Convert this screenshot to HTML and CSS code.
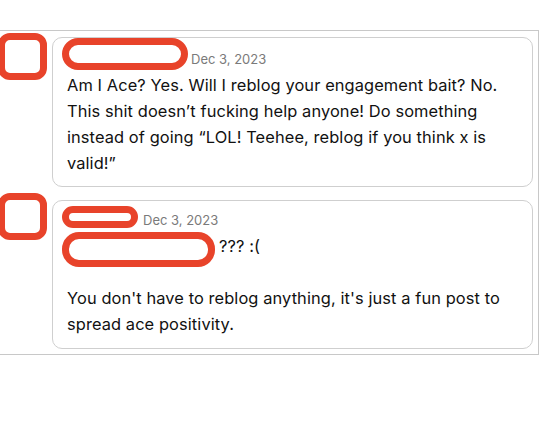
FILE: index.html
```html
<!DOCTYPE html>
<html>
<head>
<meta charset="utf-8">
<link rel="stylesheet" href="styles.css">
</head>
<body>
<div class="thread">
  <div class="row row-first">
    <div class="avatar-col"><div class="redact avatar"></div></div>
    <div class="card card-first">
      <div class="head">
        <span class="redact name-a"></span>
        <span class="date">Dec 3, 2023</span>
      </div>
      <p class="body">Am I Ace? Yes. Will I reblog your engagement bait? No. This shit doesn’t fucking help anyone! Do something instead of going “LOL! Teehee, reblog if you think x is valid!”</p>
    </div>
  </div>
  <div class="row row-second">
    <div class="avatar-col"><div class="redact avatar avatar-second"></div></div>
    <div class="card card-second">
      <div class="head">
        <span class="redact name-b"></span>
        <span class="date">Dec 3, 2023</span>
      </div>
      <p class="body mention-line"><span class="redact mention"></span>??? :(</p>
      <p class="body spaced">You don't have to reblog anything, it's just a fun post to spread ace positivity.</p>
    </div>
  </div>
</div>
</body>
</html>
```
FILE: styles.css
```css
html, body {
  margin: 0;
  padding: 0;
  background: #ffffff;
}
body {
  font-family: "Inter", "Liberation Sans", sans-serif;
  color: #111111;
}
.thread {
  margin-top: 30px;
  width: 539px;
  box-sizing: border-box;
  border: 1px solid #c8c8c8;
  border-left: none;
  padding: 6px 0 5px 0;
  display: flex;
  flex-direction: column;
  gap: 13px;
}
.row {
  display: flex;
  align-items: flex-start;
}
.avatar-col {
  width: 52px;
  flex: none;
}
.redact {
  box-sizing: border-box;
  border: 7px solid #e8432a;
  background: #ffffff;
}
.avatar {
  width: 49px;
  height: 47px;
  margin-left: -2px;
  margin-top: -4px;
  border-radius: 12px;
}
.avatar-second {
  margin-top: -7px;
}
.card {
  width: 481px;
  box-sizing: border-box;
  border: 1px solid #cfcfcf;
  border-radius: 10px;
  padding: 11px 14px 10px 14px;
}
.card-first {
  height: 150px;
}
.card-second {
  height: 149px;
  padding-top: 9px;
}
.head {
  display: flex;
  align-items: center;
  height: 20px;
  margin-left: -5px;
  margin-bottom: 3px;
}
.name-a {
  width: 126px;
  height: 32px;
  border-radius: 16px;
  margin-bottom: 10px;
}
.name-b {
  width: 76px;
  height: 22px;
  border-radius: 11px;
  border-width: 7px;
  margin-bottom: 6px;
}
.date {
  font-size: 13px;
  color: #7a7a7a;
  margin-left: 3px;
  line-height: 20px;
}
.name-b + .date {
  margin-left: 5px;
}
.body {
  margin: 0;
  font-size: 16.4px;
  line-height: 26px;
  letter-spacing: 0.1px;
}
.mention-line {
  margin-left: -5px;
  display: flex;
  align-items: center;
  height: 26px;
}
.mention {
  width: 153px;
  height: 35px;
  border-radius: 17px;
  margin-right: 4px;
  margin-bottom: -6px;
}
.spaced {
  margin-top: 26px;
}
```
